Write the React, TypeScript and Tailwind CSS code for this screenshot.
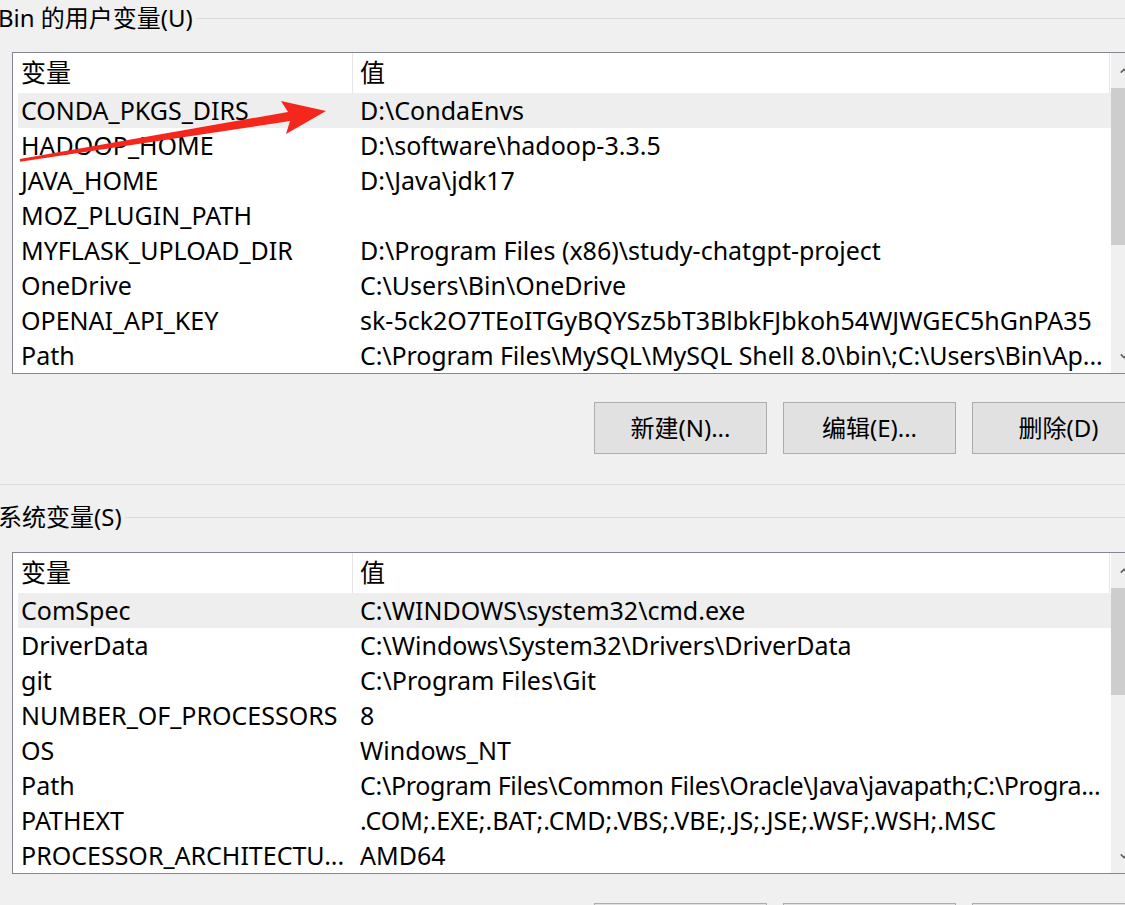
const userVars: [string, string, string?][] = [
  ['CONDA_PKGS_DIRS', 'D:\\CondaEnvs'],
  ['HADOOP_HOME', 'D:\\software\\hadoop-3.3.5'],
  ['JAVA_HOME', 'D:\\Java\\jdk17'],
  ['MOZ_PLUGIN_PATH', ''],
  ['MYFLASK_UPLOAD_DIR', 'D:\\Program Files (x86)\\study-chatgpt-project'],
  ['OneDrive', 'C:\\Users\\Bin\\OneDrive'],
  ['OPENAI_API_KEY', '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'],
  ['Path', 'C:\\Program Files\\MySQL\\MySQL Shell 8.0\\bin\\;C:\\Users\\Bin\\Ap...', 'tracking-[-0.1px]'],
];

const sysVars: [string, string, string?][] = [
  ['ComSpec', 'C:\\WINDOWS\\system32\\cmd.exe'],
  ['DriverData', 'C:\\Windows\\System32\\Drivers\\DriverData'],
  ['git', 'C:\\Program Files\\Git'],
  ['NUMBER_OF_PROCESSORS', '8'],
  ['OS', 'Windows_NT'],
  ['Path', 'C:\\Program Files\\Common Files\\Oracle\\Java\\javapath;C:\\Progra...', 'tracking-[-0.3px]'],
  ['PATHEXT', '.COM;.EXE;.BAT;.CMD;.VBS;.VBE;.JS;.JSE;.WSF;.WSH;.MSC'],
  ['PROCESSOR_ARCHITECTU...', 'AMD64'],
];

function Caret({ down }: { down?: boolean }) {
  return (
    <svg width="10" height="8" viewBox="0 0 10 8" className="ml-[9px]">
      <path d={down ? 'M1 2 L5 6 L9 2' : 'M1 6 L5 2 L9 6'} fill="none" stroke="#606060" strokeWidth="2" />
    </svg>
  );
}

function GroupTitle({ text }: { text: string }) {
  return (
    <div className="h-[36px] flex items-center">
      <span className="ml-[-2px] text-[24px] leading-none whitespace-nowrap">{text}</span>
      <div className="flex-1 h-px bg-[#dcdcdc] ml-[3px]" />
    </div>
  );
}

function VarList({ rows, thumb }: { rows: [string, string, string?][]; thumb: string }) {
  return (
    <div className="ml-[12px] w-[1117px] h-[322px] border border-[#828790] bg-white flex shrink-0">
      <div className="w-[1098px] flex flex-col overflow-hidden">
        <div className="h-[40px] w-[1097px] flex border-r border-[#e5e5e5] shrink-0">
          <div className="w-[340px] pl-[8px] flex items-center border-r border-[#e5e5e5]">变量</div>
          <div className="flex-1 pl-[7px] flex items-center">值</div>
        </div>
        <div className="pl-[5px]">
          {rows.map(([k, v, extra], i) => (
            <div
              key={k + i}
              className={`h-[35px] w-[1093px] flex items-center whitespace-nowrap ${i === 0 ? 'bg-[#eeeeee]' : ''}`}
            >
              <div className="w-[334px] pl-[3px] overflow-hidden">{k}</div>
              <div className={`flex-1 pl-[8px] overflow-hidden ${extra ?? ''}`}>{v}</div>
            </div>
          ))}
        </div>
      </div>
      <div className="w-[17px] bg-[#f0f0f0] flex flex-col">
        <div className="h-[35px] flex items-center shrink-0">
          <Caret />
        </div>
        <div className={`${thumb} bg-[#cdcdcd] shrink-0`} />
        <div className="flex-1" />
        <div className="h-[35px] flex items-center shrink-0">
          <Caret down />
        </div>
      </div>
    </div>
  );
}

function Buttons() {
  const labels = ['新建(N)...', '编辑(E)...', '删除(D)'];
  return (
    <div className="flex gap-[16px] ml-[594px] shrink-0">
      {labels.map((l) => (
        <div
          key={l}
          className="w-[173px] h-[52px] shrink-0 bg-[#e1e1e1] border border-[#adadad] flex items-center justify-center text-[24px]"
        >
          {l}
        </div>
      ))}
    </div>
  );
}

export default function App() {
  return (
    <div className="relative w-[1125px] h-[905px] overflow-hidden bg-[#f0f0f0] text-black text-[25px] font-['Noto_Sans','Noto_Sans_CJK_SC',sans-serif]">
      <div className="flex flex-col">
        <GroupTitle text="Bin 的用户变量(U)" />
        <div className="mt-[16px]">
          <VarList rows={userVars} thumb="h-[157px]" />
        </div>
        <div className="mt-[28px]">
          <Buttons />
        </div>
        <div className="mt-[30px] h-px bg-[#dcdcdc]" />
        <div className="mt-[14px]">
          <GroupTitle text="系统变量(S)" />
        </div>
        <div className="mt-[17px]">
          <VarList rows={sysVars} thumb="h-[107px]" />
        </div>
        <div className="mt-[29px]">
          <Buttons />
        </div>
      </div>
      {/* red annotation arrow */}
      <svg className="absolute left-0 top-0 pointer-events-none" width="340" height="180" viewBox="0 0 340 180">
        <polygon
          points="19.8,159 288,112 281,101 326,111 286,134 290,121 20.2,161.8"
          fill="#f5261c"
        />
      </svg>
    </div>
  );
}
